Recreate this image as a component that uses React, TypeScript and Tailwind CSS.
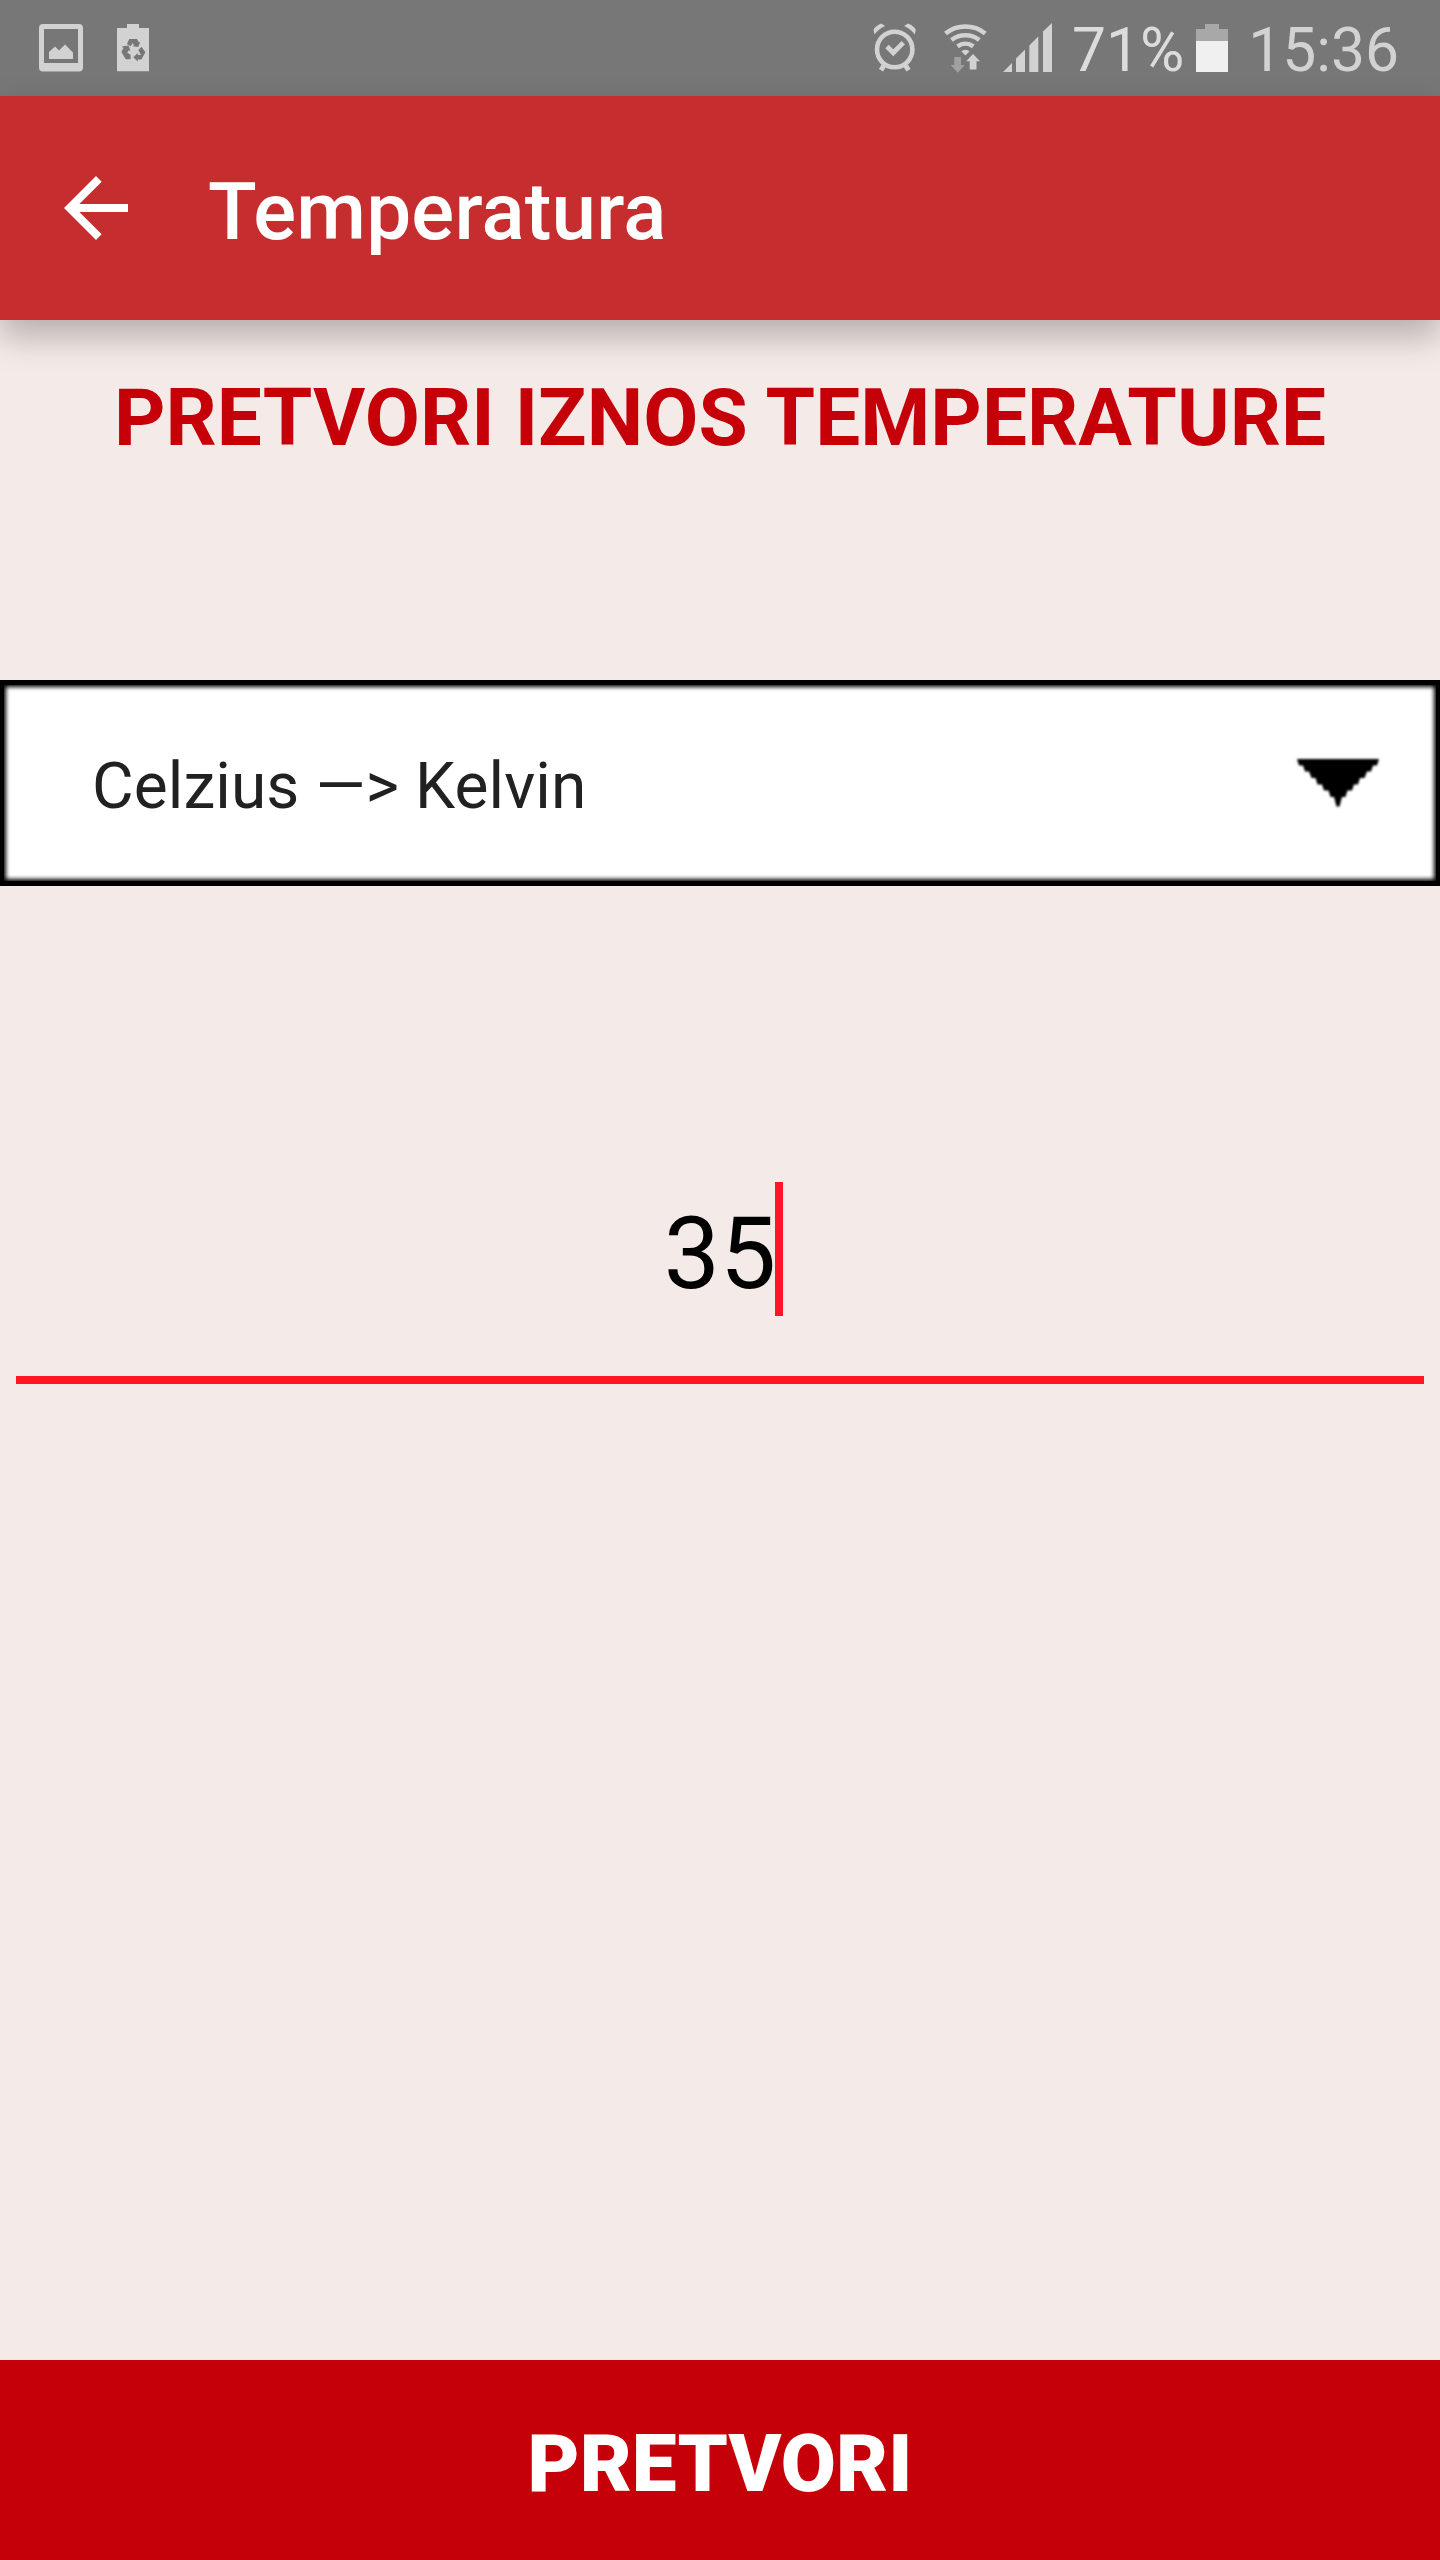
import React from "react";

function PictureIcon() {
  return (
    <svg className="h-24 w-11 shrink-0" viewBox="39 0 44 96" fill="#d2d2d2">
      <path
        fillRule="evenodd"
        d="M43 24H79a4 4 0 0 1 4 4V67.500a4 4 0 0 1-4 4H43a4 4 0 0 1-4-4V28a4 4 0 0 1 4-4ZM44 29V63H78V29Z"
      />
      <path d="M49 59V52L55 46.500L59 50.500L65 44.500L73 52.500V59Z" />
    </svg>
  );
}

function RecycleBatteryIcon() {
  return (
    <svg className="h-24 w-8 shrink-0" viewBox="117 0 32 96">
      <path fill="#d2d2d2" d="M117 28h10v-4h12v4h10v43.300h-32z" />
      <g fill="#777777">
        <path d="M129.300 39H137l2 3.500 1.400-.8-2.200 5.400-5.700-.8 1.500-1-1.200-2.300-2.200 3.200-3.700-2.300z" />
        <path d="M141.500 46.700l3.900 5.500-4 7.300h-3.600v1.900l-4.500-4.200 4.500-4.200v2.100h3.200l-2.700-5.100z" />
        <path d="M123 46.300l5.600-.7 1.800 5.500-1.700-.8-1.400 2.400 3.300 2.100v4.400h-4.800l-4.400-7.200 2.200-4.200-2-.9z" />
      </g>
    </svg>
  );
}

function AlarmIcon() {
  return (
    <svg className="h-24 w-11 shrink-0" viewBox="873 0 44 96" fill="none" stroke="#d2d2d2">
      <circle cx="894.700" cy="49.500" r="17.700" strokeWidth="4.600" />
      <path strokeWidth="4.800" d="M887 46.500l6.300 6.300 10-10.200" />
      <path strokeWidth="5" d="M884.500 64.500l-3.500 5.700M905 64.500l3.500 5.700" />
      <path
        fill="#d2d2d2"
        stroke="none"
        d="M873.500 29.800q2-4 7.700-6.200l4 2.400q-7.200 3.500-10.700 8.500zM915.800 29.800q-2-4-7.700-6.200l-4 2.400q7.200 3.500 10.700 8.500z"
      />
    </svg>
  );
}

function WifiIcon() {
  return (
    <svg className="h-24 w-11 shrink-0" viewBox="943 0 44 96" fill="none">
      <g stroke="#d2d2d2" strokeWidth="4.600">
        <path d="M945.500 33.500a32 32 0 0 1 39.800 0" />
        <path d="M951.500 40a23 23 0 0 1 27.800 0" />
        <path d="M957.500 46.300a13.500 13.500 0 0 1 15.800 0" />
      </g>
      <path fill="#d2d2d2" d="M961.300 51.200q4.200-3 8.300 0l-4.200 4.300z" />
      <path fill="#d2d2d2" d="M973 54l7 7.200h-3.500V69.500h-6.800V61.200h-3.500z" />
      <path fill="#a0a0a0" d="M954.300 57h6.700v8h3.800l-7.100 7.800-7-7.800h3.600z" />
    </svg>
  );
}

function SignalIcon() {
  return (
    <svg className="h-24 w-[49px] shrink-0" viewBox="1003 0 49 96" fill="#d2d2d2">
      <path d="M1003 72l9-9v9zM1016 72V58.500l9-9V72zM1029.300 72V45.500l9-9V72zM1043 72V31.500l9-8.500V72z" />
    </svg>
  );
}

function BatteryIcon() {
  return (
    <svg className="h-24 w-8 shrink-0" viewBox="1196 0 32 96">
      <path fill="#a8a8a8" d="M1196 29h9v-5h14v5h9v12h-32z" />
      <path fill="#f0f0f0" d="M1196 41h32v31h-32z" />
    </svg>
  );
}

function StatusBar() {
  return (
    <div className="flex h-24 shrink-0 items-start justify-between bg-[#777777] pr-10 pl-[39px] text-[60.5px] leading-[96px] text-[#d2d2d2]">
      <div className="flex gap-[34px]">
        <PictureIcon />
        <RecycleBatteryIcon />
      </div>
      <div className="flex items-start">
        <AlarmIcon />
        <div className="ml-[26px] flex">
          <WifiIcon />
        </div>
        <div className="ml-4 flex">
          <SignalIcon />
        </div>
        <span className="ml-5 w-[124px] pt-[3px] text-[#dcdcdc]">71%</span>
        <BatteryIcon />
        <span className="w-[172px] pt-[3px] pr-px text-right whitespace-nowrap">15:36</span>
      </div>
    </div>
  );
}

export default function App() {
  return (
    <div className="flex h-[2560px] w-[1440px] flex-col overflow-hidden bg-[#f4eae8] font-['Roboto',sans-serif]">
      <StatusBar />
      <header className="z-10 flex h-56 shrink-0 items-center bg-[#c62d2f] pl-12 text-white shadow-[0_16px_32px_rgba(0,0,0,0.26)]">
        <button aria-label="Natrag">
          <svg className="block size-24" viewBox="0 0 24 24" fill="currentColor">
            <path d="M20 11H7.830l5.590-5.590L12 4l-8 8 8 8 1.410-1.410L7.830 13H20z" />
          </svg>
        </button>
        <h1 className="pt-2 pl-16 text-[80px] leading-[94px] font-medium tracking-[0.2px]">Temperatura</h1>
      </header>
      <main className="flex grow flex-col">
        <h2 className="mt-[51px] text-center text-[80px] leading-[94px] font-bold tracking-[0.05px] whitespace-nowrap text-[#c60008]">
          PRETVORI IZNOS TEMPERATURE
        </h2>
        <div className="mt-[215px] flex h-[206px] items-center justify-between border-x-4 border-y-5 border-black bg-white pr-[57px] pl-[88px] text-[64px] text-[#212121] shadow-[inset_0_0_4px_2px_#000]">
          <span className="pt-[7px] leading-[76px] tracking-[0.1px]">Celzius —&gt; Kelvin</span>
          <svg className="w-[82px] overflow-visible blur-[1px]" viewBox="0 0 82 48">
            <path
              d="M0 0H82L80 6.500H76L74 12.500H70L67.500 19H63L61 25.500H57L55 31.500H50.500L48.500 38H45L42.500 47.500H39.500L37 38H33.500L31.500 31.500H27L25 25.500H20.500L18.500 19H14.500L12 12.500H8L6 6.500H2z"
              fill="#000"
            />
          </svg>
        </div>
        <div className="mx-4 mt-[296px] flex h-[202px] items-start justify-center border-b-8 border-[#ff1524] text-[100px] leading-[134px] text-black">
          <span className="pt-[5px]">35</span>
          <span className="-mr-[7px] -ml-px h-[134px] w-2 bg-[#ff1524]" />
        </div>
      </main>
      <button className="h-[200px] shrink-0 bg-[#c60008] pt-2 text-[80px] leading-[94px] font-black text-white">
        PRETVORI
      </button>
    </div>
  );
}
